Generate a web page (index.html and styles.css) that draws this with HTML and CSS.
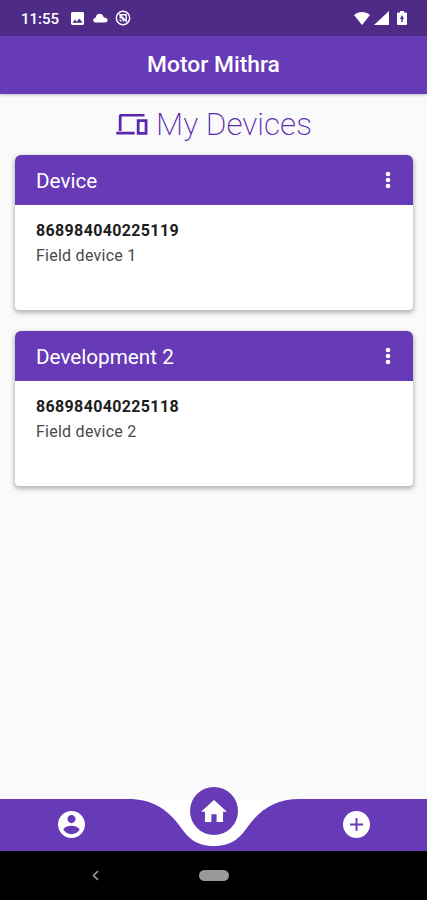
FILE: index.html
```html
<!DOCTYPE html>
<html lang="en">
<head>
<meta charset="utf-8">
<title>Motor Mithra</title>
<link rel="stylesheet" href="styles.css">
</head>
<body>
<div class="status">
  <span class="time">11:55</span>
  <svg class="st-img" viewBox="3 3 18 18"><path d="M21 19V5c0-1.100-.9-2-2-2H5c-1.100 0-2 .9-2 2v14c0 1.100.9 2 2 2h14c1.100 0 2-.9 2-2zM8.500 13.500l2.500 3.010L14.500 12l4.500 6H5l3.500-4.500z"/></svg>
  <svg class="st-cloud" viewBox="0 0 15 10"><path d="M3 9.500C-.8 9.500-.7 5 2.500 5 3 .5 8.500-.8 10.200 3.300L11 4.500c4.500-.1 4.800 5 1 5z"/></svg>
  <svg class="st-cast" viewBox="0 0 16 16"><circle cx="8" cy="8" r="6.700"/><path d="M5.500 4.800h5.700v5.400M4 4l8 8M4.300 7.300c2.500 0 4.200 1.800 4.200 4.300M4.300 9.900c1 0 1.700.7 1.700 1.700"/></svg>
  <span class="grow"></span>
  <svg class="st-wifi" viewBox="0 0 16 13"><path d="M8 13 0 3C4.500-.9 11.500-.9 16 3z"/></svg>
  <svg class="st-signal" viewBox="0 0 15 14"><path d="M15 0v14H0z"/></svg>
  <svg class="st-battery" viewBox="0 0 10 14"><path fill-rule="evenodd" d="M3 0h4v1.500h2q1 0 1 1V13q0 1-1 1H1q-1 0-1-1V2.500q0-1 1-1h2zM5 4 3 8h1.300v3h1.400V8H7z"/></svg>
</div>
<header class="appbar">Motor Mithra</header>
<main>
  <h1><svg class="devices" viewBox="0 4 24 16"><path d="M3 17V6q0-1.200 1-1.200H21.500M0 18.500H14" /><path d="M16.700 9h6v9.700h-6z"/></svg><span>My Devices</span></h1>
  <section class="card">
    <div class="card-head"><h2>Device</h2><svg class="dots" viewBox="0 0 6 18"><circle cx="3" cy="3" r="2.300"/><circle cx="3" cy="9" r="2.300"/><circle cx="3" cy="15" r="2.300"/></svg></div>
    <div class="card-body"><b>868984040225119</b><p>Field device 1</p></div>
  </section>
  <section class="card">
    <div class="card-head"><h2>Development 2</h2><svg class="dots" viewBox="0 0 6 18"><circle cx="3" cy="3" r="2.300"/><circle cx="3" cy="9" r="2.300"/><circle cx="3" cy="15" r="2.300"/></svg></div>
    <div class="card-body"><b>868984040225118</b><p>Field device 2</p></div>
  </section>
</main>
<nav class="tabs">
  <svg class="curve" viewBox="0 0 427 52"><path d="M0 0H128C152 0 167 10 179 26C187 37 194 47 214 47S241 37 249 26C261 10 276 0 300 0H427V52H0z"/></svg>
  <a class="tab"><svg viewBox="2 2 20 20"><path d="M12 2C6.480 2 2 6.480 2 12s4.480 10 10 10 10-4.480 10-10S17.520 2 12 2zm0 3c1.660 0 3 1.340 3 3s-1.340 3-3 3-3-1.340-3-3 1.340-3 3-3zm0 14.200c-2.500 0-4.710-1.280-6-3.220.03-1.990 4-3.080 6-3.080 1.990 0 5.970 1.090 6 3.080-1.290 1.940-3.500 3.220-6 3.220z"/></svg></a>
  <a class="tab home"><svg viewBox="2 3 20 17"><path d="M10 20v-6h4v6h5v-8h3L12 3 2 12h3v8z"/></svg></a>
  <a class="tab"><svg viewBox="2 2 20 20"><path d="M12 2C6.480 2 2 6.480 2 12s4.480 10 10 10 10-4.480 10-10S17.520 2 12 2zm4.800 10.700h-4.100v4.100h-1.400v-4.100H7.200v-1.400h4.100V7.200h1.400v4.100h4.100v1.400z"/></svg></a>
</nav>
<footer class="system">
  <svg class="back" viewBox="0 0 7 10"><path d="M6 .7 1.500 5 6 9.300"/></svg>
  <span class="pill"></span>
  <span></span>
</footer>
</body>
</html>
```
FILE: styles.css
```css
* { box-sizing: border-box; }
body {
  margin: 0;
  height: 900px;
  display: flex;
  flex-direction: column;
  overflow: hidden;
  background: #fafafa;
  font-family: Roboto, sans-serif;
}
svg { display: block; flex: none; fill: #fff; }
h1, h2, p { margin: 0; }

.status {
  height: 36px;
  flex: none;
  display: flex;
  align-items: center;
  padding: 0 20px 0 21px;
  background: #4e2b87;
  color: #fff;
}
.time { width: 50px; font-size: 15px; font-weight: 500; line-height: 18px; padding-top: 1px; }
.grow { flex: 1; }
.st-img { width: 13px; height: 13px; }
.st-cloud { width: 15px; height: 10px; margin-left: 9px; }
.st-cast { width: 16px; height: 16px; margin-left: 7px; }
.st-cast circle, .st-cast path { fill: none; stroke: #fff; stroke-width: 1.4; }
.st-wifi { width: 16px; height: 13px; }
.st-signal { width: 15px; height: 14px; margin-left: 4px; }
.st-battery { width: 10px; height: 14px; margin-left: 8px; }

.appbar {
  height: 58px;
  flex: none;
  position: relative;
  background: #673ab7;
  color: #fff;
  font-size: 22.8px;
  font-weight: 500;
  line-height: 57px;
  text-align: center;
  box-shadow: 0 1px 3px rgba(0, 0, 0, .25);
}

main { flex: 1; padding: 0 14px 0 15px; }
h1 {
  height: 61px;
  display: flex;
  align-items: center;
  justify-content: center;
  gap: 8px;
  color: #5a2cae;
  font-size: 31.5px;
  font-weight: 200;
}
.devices { width: 32px; height: 21px; }
.devices path { fill: none; stroke: #5a28b0; stroke-width: 2.1; }

.card {
  height: 155px;
  margin-bottom: 21px;
  border-radius: 6px 6px 4px 4px;
  overflow: hidden;
  background: #fff;
  box-shadow: 0 2px 4px 1px rgba(0, 0, 0, .28);
}
.card-head {
  height: 49.5px;
  display: flex;
  align-items: center;
  justify-content: space-between;
  padding: 2px 22px 0 21px;
  background: #673ab7;
  color: #fff;
}
h2 { font-size: 20.7px; font-weight: 400; }
.dots { width: 6px; height: 18px; margin-bottom: 2px; }
.card-body { padding: 13px 21px; color: #484848; font-size: 16px; line-height: 25px; letter-spacing: .25px; }
.card-body b { display: block; color: #1c1c1c; font-weight: 700; letter-spacing: .35px; }

.tabs {
  height: 52px;
  flex: none;
  display: grid;
  grid-template: 52px / 143px 142px 142px;
  align-items: center;
  justify-items: center;
  position: relative;
  background: #fff;
}
.curve { position: absolute; inset: 0; width: 427px; height: 52px; fill: #673ab7; }
.tab { position: relative; margin-bottom: 1px; }
.tab svg { width: 27px; height: 27px; }
.tab.home {
  width: 48px;
  height: 48px;
  margin-bottom: 28px;
  display: grid;
  place-items: center;
  border-radius: 50%;
  background: #673ab7;
}
.home svg { width: 26px; height: 22px; }

.system {
  height: 49px;
  flex: none;
  display: grid;
  grid-template-columns: 191px 46px 190px;
  align-items: center;
  justify-items: center;
  background: #000;
}
.back { width: 7px; height: 11px; }
.back path { fill: none; stroke: #999; stroke-width: 1.6; }
.pill { width: 30px; height: 11px; border-radius: 6px; background: #999; }
```
